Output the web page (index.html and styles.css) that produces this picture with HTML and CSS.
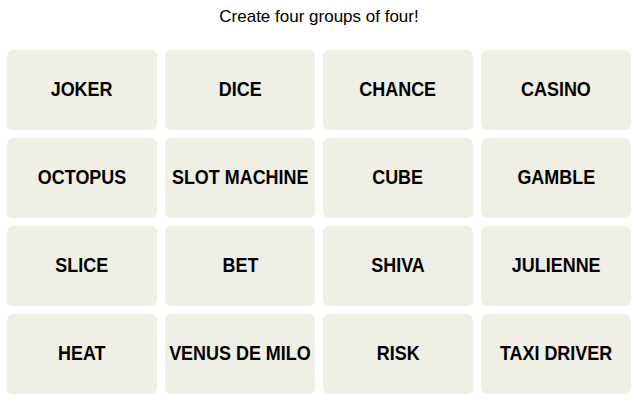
FILE: index.html
```html
<!DOCTYPE html>
<html>
<head>
<meta charset="utf-8">
<link rel="stylesheet" href="styles.css">
</head>
<body>
<main class="game">
  <p class="prompt">Create four groups of four!</p>
  <div class="board">
    <button class="tile"><span class="word">JOKER</span></button>
    <button class="tile"><span class="word">DICE</span></button>
    <button class="tile"><span class="word">CHANCE</span></button>
    <button class="tile"><span class="word">CASINO</span></button>
    <button class="tile"><span class="word">OCTOPUS</span></button>
    <button class="tile"><span class="word">SLOT MACHINE</span></button>
    <button class="tile"><span class="word">CUBE</span></button>
    <button class="tile"><span class="word">GAMBLE</span></button>
    <button class="tile"><span class="word">SLICE</span></button>
    <button class="tile"><span class="word">BET</span></button>
    <button class="tile"><span class="word">SHIVA</span></button>
    <button class="tile"><span class="word">JULIENNE</span></button>
    <button class="tile"><span class="word">HEAT</span></button>
    <button class="tile"><span class="word">VENUS DE MILO</span></button>
    <button class="tile"><span class="word">RISK</span></button>
    <button class="tile"><span class="word">TAXI DRIVER</span></button>
  </div>
</main>
</body>
</html>
```
FILE: styles.css
```css
html, body {
  margin: 0;
  padding: 0;
  background: #ffffff;
}
.game {
  width: 624px;
  margin: 0 auto;
  font-family: "Liberation Sans", Arial, sans-serif;
}
.prompt {
  margin: 0;
  padding-top: 7px;
  height: 50px;
  box-sizing: border-box;
  text-align: center;
  font-size: 17px;
  line-height: 20px;
  color: #000;
}
.board {
  display: grid;
  grid-template-columns: repeat(4, 150px);
  grid-auto-rows: 80px;
  gap: 8px;
}
.tile {
  border: none;
  margin: 0;
  padding: 0 0 2px;
  background: #efefe6;
  border-radius: 6px;
  font-family: "Liberation Sans", Arial, sans-serif;
  font-weight: 700;
  font-size: 19.5px;
  color: #000;
  display: flex;
  align-items: center;
  justify-content: center;
  white-space: nowrap;
}
.word {
  display: inline-block;
  transform: scaleX(0.92);
}
```
